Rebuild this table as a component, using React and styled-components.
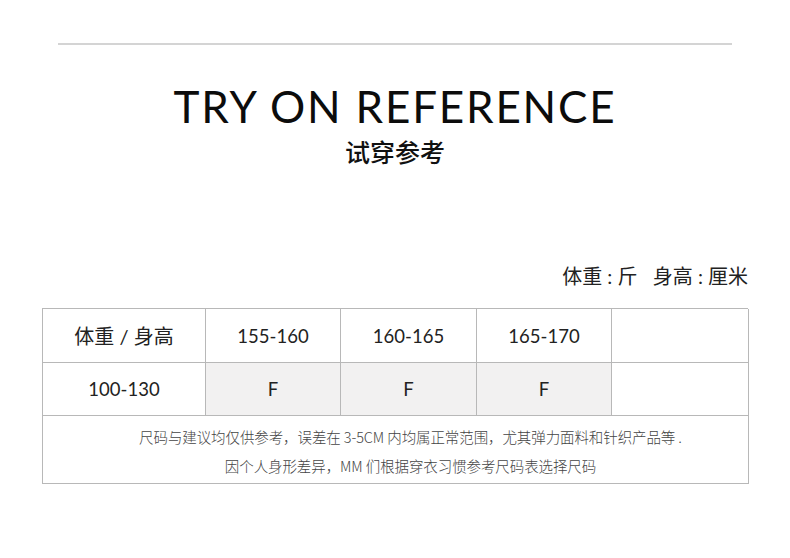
import React from "react";
import styled, { createGlobalStyle } from "styled-components";

const GlobalStyle = createGlobalStyle`
  html, body {
    margin: 0;
    padding: 0;
    background: #ffffff;
  }
  body {
    font-family: "Lato", "Noto Sans CJK SC", sans-serif;
    color: #111;
  }
`;

const heights = ["155-160", "160-165", "165-170", ""];
const sizes = ["F", "F", "F", ""];

const App = () => {
  return (
    <Page>
      <GlobalStyle />
      <TopRule />
      <Title>TRY ON REFERENCE</Title>
      <SubTitle>试穿参考</SubTitle>
      <Units>体重 : 斤&nbsp;&nbsp;&nbsp;身高 : 厘米</Units>
      <Table>
        <Cell wide>体重 / 身高</Cell>
        {heights.map((h, i) => (
          <Cell key={"h" + i}>{h}</Cell>
        ))}
        <Cell>100-130</Cell>
        {sizes.map((s, i) => (
          <Cell key={"s" + i} shaded={s !== ""}>
            {s}
          </Cell>
        ))}
        <Note>
          <span>尺码与建议均仅供参考，误差在 3-5CM 内均属正常范围，尤其弹力面料和针织产品等 .</span>
          <span>因个人身形差异，MM 们根据穿衣习惯参考尺码表选择尺码</span>
        </Note>
      </Table>
    </Page>
  );
};

const Page = styled.div`
  width: 790px;
  height: 558px;
  box-sizing: border-box;
  padding: 43px 42px 0 42px;
  display: flex;
  flex-direction: column;
`;

const TopRule = styled.div`
  height: 2px;
  margin: 0 16px;
  background-color: #d4d4d4;
`;

const Title = styled.h1`
  margin: 35px 0 0 0;
  font-family: "Lato", sans-serif;
  font-weight: 400;
  font-size: 44px;
  line-height: 52px;
  text-align: center;
  color: #0c0c0c;
  letter-spacing: 1.8px;
`;

const SubTitle = styled.div`
  margin-top: 3px;
  font-family: "Noto Sans CJK SC", sans-serif;
  font-weight: 500;
  font-size: 25px;
  line-height: 32px;
  text-align: center;
  color: #111;
`;

const Units = styled.div`
  margin-top: 95px;
  font-family: "Lato", "Noto Sans CJK SC", sans-serif;
  font-size: 20px;
  line-height: 28px;
  text-align: right;
  color: #222;
`;

const Table = styled.div`
  margin-top: 18px;
  display: grid;
  grid-template-columns: 163px 135px 136px 135px 137px;
  grid-template-rows: 54px 53px 68px;
  border-top: 1px solid #b8b8b8;
  border-left: 1px solid #b8b8b8;
  width: 706px;
  box-sizing: border-box;
`;

const Cell = styled.div`
  display: flex;
  align-items: center;
  justify-content: center;
  border-right: 1px solid #b8b8b8;
  border-bottom: 1px solid #b8b8b8;
  background-color: ${(p) => (p.shaded ? "#f2f1f1" : "#ffffff")};
  font-family: "Lato", "Noto Sans CJK SC", sans-serif;
  font-size: ${(p) => (p.wide ? "20px" : "18.5px")};
  color: #222;
`;

const Note = styled.div`
  grid-column: 1 / -1;
  display: flex;
  flex-direction: column;
  align-items: center;
  justify-content: center;
  gap: 8px;
  padding: 2px 0 0 30px;
  border-right: 1px solid #b8b8b8;
  border-bottom: 1px solid #b8b8b8;
  font-family: "Noto Sans CJK SC", sans-serif;
  font-weight: 300;
  font-size: 14.5px;
  color: #444;
  letter-spacing: -0.1px;
`;

export default App;
